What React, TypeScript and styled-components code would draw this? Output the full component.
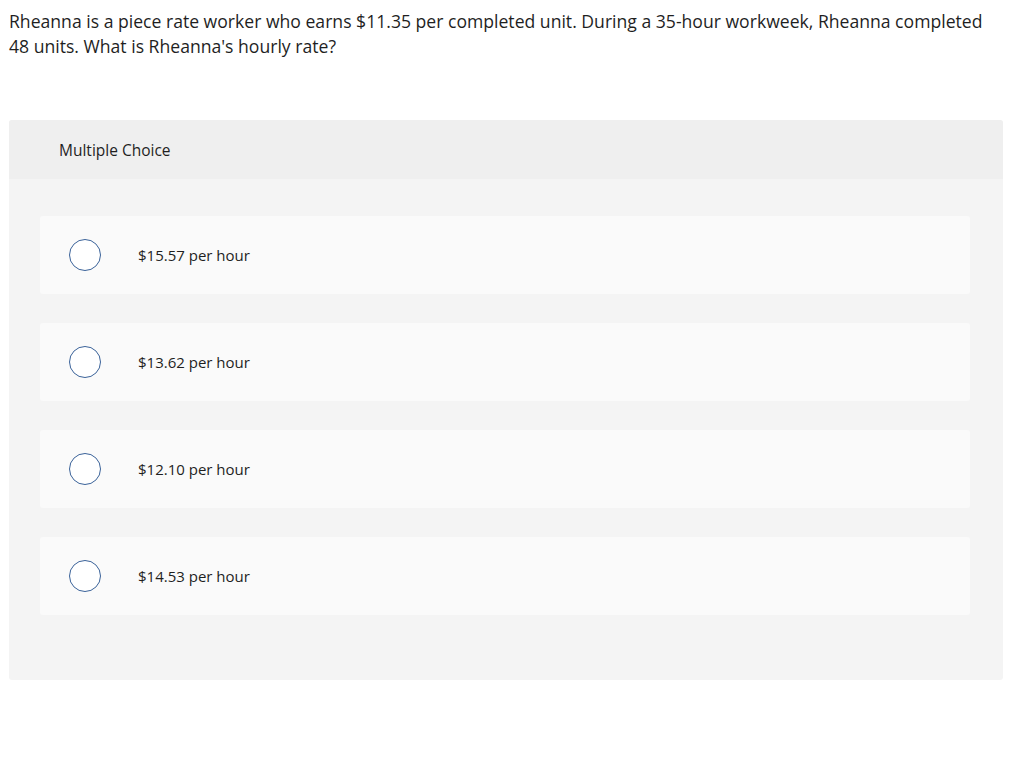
import { FunctionComponent } from "react";
import styled, { createGlobalStyle } from "styled-components";

const options = [
  "$15.57 per hour",
  "$13.62 per hour",
  "$12.10 per hour",
  "$14.53 per hour",
];

const App: FunctionComponent = () => {
  return (
    <Page>
      <GlobalStyle />
      <Question>
        Rheanna is a piece rate worker who earns $11.35 per completed unit.
        During a 35-hour workweek, Rheanna completed 48 units. What is
        Rheanna's hourly rate?
      </Question>
      <Panel>
        <PanelHeader>Multiple Choice</PanelHeader>
        <OptionList>
          {options.map((label) => (
            <Option key={label}>
              <Radio />
              <OptionText>{label}</OptionText>
            </Option>
          ))}
        </OptionList>
      </Panel>
    </Page>
  );
};

const GlobalStyle = createGlobalStyle`
  body {
    margin: 0;
    background: #ffffff;
    font-family: "Open Sans", "Liberation Sans", sans-serif;
    color: #1f1f1f;
  }
`;

const Page = styled.div`
  padding: 9px 21px 0 9px;
`;

const Question = styled.div`
  font-size: 17.6px;
  line-height: 25px;
  width: 985px;
`;

const Panel = styled.div`
  margin-top: 61px;
  background: #f4f4f4;
  border-radius: 3px;
  overflow: hidden;
  width: 994px;
`;

const PanelHeader = styled.div`
  height: 59px;
  background: #efefef;
  display: flex;
  align-items: center;
  padding-left: 50px;
  font-size: 15.5px;
`;

const OptionList = styled.div`
  display: flex;
  flex-direction: column;
  gap: 29px;
  padding: 37px 33px 65px 31px;
`;

const Option = styled.div`
  height: 78px;
  background: #fafafa;
  border-radius: 3px;
  display: flex;
  align-items: center;
  padding-left: 29px;
`;

const Radio = styled.span`
  width: 32px;
  height: 32px;
  border: 1.5px solid #3a6299;
  border-radius: 50%;
  background: #ffffff;
  box-sizing: border-box;
  flex-shrink: 0;
`;

const OptionText = styled.span`
  margin-left: 37px;
  font-size: 15px;
`;

export default App;
